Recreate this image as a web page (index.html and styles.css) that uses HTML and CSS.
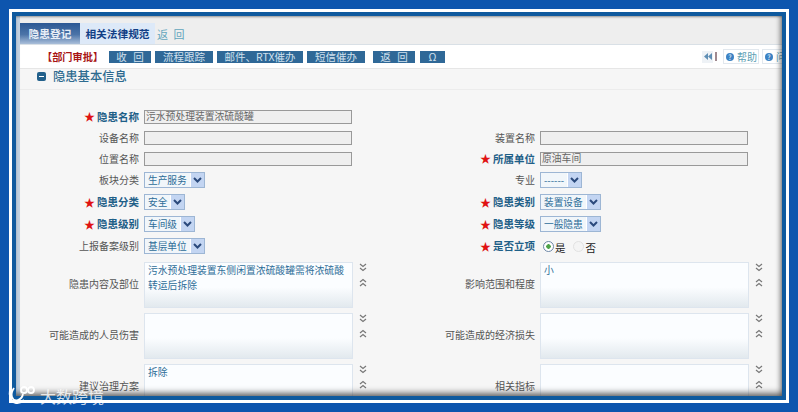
FILE: index.html
```html
<!DOCTYPE html>
<html lang="zh-CN">
<head>
  <meta charset="UTF-8">
  <title>隐患登记</title>
  <link rel="stylesheet" href="styles.css">
</head>
<body>
  <div class="frame">
    <div class="content">
      <nav class="tabbar">
        <a class="tab tab-active">隐患登记</a>
        <a class="tab">相关法律规范</a>
        <a class="tab-back">返 回</a>
      </nav>

      <div class="toolbar">
        <span class="stage">【部门审批】</span>
        <button class="btn btn-short">收 回</button>
        <button class="btn btn-mid">流程跟踪</button>
        <button class="btn btn-long">邮件、RTX催办</button>
        <button class="btn btn-mid">短信催办</button>
        <button class="btn btn-short btn-apart">返 回</button>
        <button class="btn btn-omega">Ω</button>
        <div class="tools">
          <span class="collapse">
            <svg width="8" height="7" viewBox="0 0 8 7"><path d="M4 0v7L0 3.500zM8 0v7L4 3.500z" fill="#5f8fb5"/></svg>
          </span>
          <span class="tool-sep"></span>
          <span class="help"><i class="help-icon">?</i>帮助</span>
          <span class="help"><i class="help-icon">?</i>问题</span>
        </div>
      </div>

      <h2 class="section"><span class="minus"></span>隐患基本信息</h2>

      <form class="form">
        <label class="label required"><i>★</i>隐患名称</label>
        <div class="field span-3"><input class="text" readonly value="污水预处理装置浓硫酸罐"></div>

        <label class="label">设备名称</label>
        <div class="field"><input class="text" readonly></div>
        <label class="label">装置名称</label>
        <div class="field"><input class="text" readonly></div>

        <label class="label">位置名称</label>
        <div class="field"><input class="text" readonly></div>
        <label class="label required"><i>★</i>所属单位</label>
        <div class="field"><input class="text" readonly value="原油车间"></div>

        <label class="label">板块分类</label>
        <div class="field"><span class="select"><span class="select-value">生产服务</span><span class="select-arrow"><svg width="9" height="6" viewBox="0 0 9 6"><path d="M1 1l3.500 3.500L8 1" fill="none" stroke="#2b4a7c" stroke-width="2"/></svg></span></span></div>
        <label class="label">专业</label>
        <div class="field"><span class="select"><span class="select-value">------</span><span class="select-arrow"><svg width="9" height="6" viewBox="0 0 9 6"><path d="M1 1l3.500 3.500L8 1" fill="none" stroke="#2b4a7c" stroke-width="2"/></svg></span></span></div>

        <label class="label required"><i>★</i>隐患分类</label>
        <div class="field"><span class="select"><span class="select-value">安全</span><span class="select-arrow"><svg width="9" height="6" viewBox="0 0 9 6"><path d="M1 1l3.500 3.500L8 1" fill="none" stroke="#2b4a7c" stroke-width="2"/></svg></span></span></div>
        <label class="label required"><i>★</i>隐患类别</label>
        <div class="field"><span class="select"><span class="select-value">装置设备</span><span class="select-arrow"><svg width="9" height="6" viewBox="0 0 9 6"><path d="M1 1l3.500 3.500L8 1" fill="none" stroke="#2b4a7c" stroke-width="2"/></svg></span></span></div>

        <label class="label required"><i>★</i>隐患级别</label>
        <div class="field"><span class="select"><span class="select-value">车间级</span><span class="select-arrow"><svg width="9" height="6" viewBox="0 0 9 6"><path d="M1 1l3.500 3.500L8 1" fill="none" stroke="#2b4a7c" stroke-width="2"/></svg></span></span></div>
        <label class="label required"><i>★</i>隐患等级</label>
        <div class="field"><span class="select"><span class="select-value">一般隐患</span><span class="select-arrow"><svg width="9" height="6" viewBox="0 0 9 6"><path d="M1 1l3.500 3.500L8 1" fill="none" stroke="#2b4a7c" stroke-width="2"/></svg></span></span></div>

        <label class="label">上报备案级别</label>
        <div class="field"><span class="select"><span class="select-value">基层单位</span><span class="select-arrow"><svg width="9" height="6" viewBox="0 0 9 6"><path d="M1 1l3.500 3.500L8 1" fill="none" stroke="#2b4a7c" stroke-width="2"/></svg></span></span></div>
        <label class="label required"><i>★</i>是否立项</label>
        <div class="field radios">
          <span class="radio radio-on"></span><span class="radio-text">是</span>
          <span class="radio"></span><span class="radio-text">否</span>
        </div>

        <div class="notes">
          <label class="label">隐患内容及部位</label>
          <div class="field note"><textarea readonly>污水预处理装置东侧闲置浓硫酸罐需将浓硫酸转运后拆除</textarea><span class="resize"><svg width="8" height="9" viewBox="0 0 8 9"><path d="M1 1l3 2.500L7 1M1 5l3 2.500L7 5" fill="none" stroke="#777" stroke-width="1.200"/></svg><svg width="8" height="9" viewBox="0 0 8 9"><path d="M1 4l3-2.500L7 4M1 8l3-2.500L7 8" fill="none" stroke="#777" stroke-width="1.200"/></svg></span></div>
          <label class="label">影响范围和程度</label>
          <div class="field note"><textarea readonly>小</textarea><span class="resize"><svg width="8" height="9" viewBox="0 0 8 9"><path d="M1 1l3 2.500L7 1M1 5l3 2.500L7 5" fill="none" stroke="#777" stroke-width="1.200"/></svg><svg width="8" height="9" viewBox="0 0 8 9"><path d="M1 4l3-2.500L7 4M1 8l3-2.500L7 8" fill="none" stroke="#777" stroke-width="1.200"/></svg></span></div>

          <label class="label">可能造成的人员伤害</label>
          <div class="field note"><textarea readonly></textarea><span class="resize"><svg width="8" height="9" viewBox="0 0 8 9"><path d="M1 1l3 2.500L7 1M1 5l3 2.500L7 5" fill="none" stroke="#777" stroke-width="1.200"/></svg><svg width="8" height="9" viewBox="0 0 8 9"><path d="M1 4l3-2.500L7 4M1 8l3-2.500L7 8" fill="none" stroke="#777" stroke-width="1.200"/></svg></span></div>
          <label class="label">可能造成的经济损失</label>
          <div class="field note"><textarea readonly></textarea><span class="resize"><svg width="8" height="9" viewBox="0 0 8 9"><path d="M1 1l3 2.500L7 1M1 5l3 2.500L7 5" fill="none" stroke="#777" stroke-width="1.200"/></svg><svg width="8" height="9" viewBox="0 0 8 9"><path d="M1 4l3-2.500L7 4M1 8l3-2.500L7 8" fill="none" stroke="#777" stroke-width="1.200"/></svg></span></div>

          <label class="label">建议治理方案</label>
          <div class="field note"><textarea readonly>拆除</textarea><span class="resize"><svg width="8" height="9" viewBox="0 0 8 9"><path d="M1 1l3 2.500L7 1M1 5l3 2.500L7 5" fill="none" stroke="#777" stroke-width="1.200"/></svg><svg width="8" height="9" viewBox="0 0 8 9"><path d="M1 4l3-2.500L7 4M1 8l3-2.500L7 8" fill="none" stroke="#777" stroke-width="1.200"/></svg></span></div>
          <label class="label">相关指标</label>
          <div class="field note"><textarea readonly></textarea><span class="resize"><svg width="8" height="9" viewBox="0 0 8 9"><path d="M1 1l3 2.500L7 1M1 5l3 2.500L7 5" fill="none" stroke="#777" stroke-width="1.200"/></svg><svg width="8" height="9" viewBox="0 0 8 9"><path d="M1 4l3-2.500L7 4M1 8l3-2.500L7 8" fill="none" stroke="#777" stroke-width="1.200"/></svg></span></div>
        </div>
      </form>
    </div>
  </div>

  <div class="watermark">
    <svg width="27" height="20" viewBox="0 0 27 20"><g fill="none" stroke="#fff" stroke-width="1.800"><path d="M15 8c-1 6-9 9-11 3-1-3 0-6 2-9"/><path d="M2 3c-1 6 0 13 6 14 3 .500 6-1 8-3"/><circle cx="16" cy="4" r="3"/><circle cx="23" cy="4" r="3"/></g></svg>
    <span>大数跨境</span>
  </div>
</body>
</html>
```

FILE: styles.css
```css
* {
  box-sizing: border-box;
}

html, body {
  margin: 0;
  height: 100%;
  overflow: hidden;
}

body {
  background: #0d55ae;
  padding: 9px;
  font-family: "Noto Sans CJK SC", "Liberation Sans", sans-serif;
  font-size: 10px;
  color: #555;
}

.frame {
  width: 780px;
  height: 394px;
  border: 3px solid #fff;
  background: #0f5a9e;
  padding: 4px;
}

.content {
  position: relative;
  height: 100%;
  overflow: hidden;
  background: #f6f6f6;
  padding-left: 4px;
}

.content::before {
  content: "";
  position: absolute;
  left: 0;
  top: 0;
  bottom: 0;
  width: 4px;
  background: #c4d4e4;
}

.content::after {
  content: "";
  position: absolute;
  inset: 0;
  pointer-events: none;
  box-shadow: inset -4px 0 5px -2px rgba(60, 60, 60, .55), inset 0 -6px 6px -3px rgba(50, 50, 50, .7), inset 0 2px 2px -1px rgba(60, 60, 60, .4);
}

/* tabs */
.tabbar {
  display: flex;
  align-items: center;
  height: 29px;
  padding-top: 7px;
  background: #eeeeee;
  border-bottom: 1px solid #d9e0e6;
}

.tab {
  display: flex;
  align-items: center;
  justify-content: center;
  width: 75px;
  height: 21px;
  background: #dde9f8;
  color: #123f86;
  font-weight: 700;
  font-size: 10.7px;
}

.tab-active {
  width: 60px;
  color: #e8eef6;
  background: linear-gradient(#2b5894, #4c74a8 55%, #aabfda);
}

.tab-back {
  margin-left: 2px;
  color: #62a6bd;
  font-size: 11px;
  word-spacing: 3px;
}

/* toolbar */
.toolbar {
  display: flex;
  align-items: center;
  height: 24px;
  padding: 0 0 0 22px;
  background: #fff;
  border-bottom: 1px solid #e6e6e6;
}

.stage {
  width: 67px;
  color: #a81414;
  font-weight: 700;
  font-size: 10.2px;
  text-spacing-trim: space-all;
  white-space: nowrap;
}

.btn {
  height: 12px;
  margin-right: 4px;
  padding: 0;
  border: 0;
  background: #2f6897;
  color: #cfe0ee;
  font: inherit;
  font-size: 10.5px;
  line-height: 12px;
  word-spacing: 4px;
}

.btn-short { width: 42px; }
.btn-mid { width: 58px; }
.btn-long { width: 86px; }
.btn-apart { margin-left: 4px; margin-right: 5px; }
.btn-omega { width: 25px; margin-right: 0; }

.tools {
  display: flex;
  align-items: center;
  margin-left: auto;
  white-space: nowrap;
}

.collapse {
  display: flex;
  align-items: center;
  justify-content: center;
  width: 11px;
  height: 12px;
  background: #eef2f6;
}

.tool-sep {
  width: 2px;
  height: 9px;
  margin: 0 6px 0 2px;
  background: #a08a90;
}

.help {
  display: flex;
  align-items: center;
  flex-shrink: 0;
  gap: 3px;
  width: 36px;
  height: 15px;
  margin-right: 3px;
  padding: 0 1px 0 2px;
  border: 1px solid #e2e8ee;
  color: #5da0b4;
  font-size: 10px;
}

.help:last-child {
  margin-right: -16px;
}

.help-icon {
  width: 8px;
  height: 8px;
  border-radius: 50%;
  background: #3c82c4;
  color: #fff;
  font-style: normal;
  font-size: 7px;
  line-height: 8px;
  text-align: center;
}

/* section title */
.section {
  display: flex;
  align-items: center;
  gap: 7px;
  height: 21px;
  margin: 0;
  padding: 0 0 6px 17px;
  border-bottom: 1px solid #ececec;
  color: #2e6b90;
  font-size: 12.3px;
  font-weight: 500;
}

.minus {
  position: relative;
  width: 9px;
  height: 9px;
  border-radius: 2px;
  background: #23618c;
}

.minus::after {
  content: "";
  position: absolute;
  left: 2px;
  right: 2px;
  top: 4px;
  height: 1px;
  background: #fff;
}

/* form */
.form,
.notes {
  display: grid;
  grid-template-columns: 119px 272px 114px 1fr;
  column-gap: 5px;
}

.form {
  grid-template-rows: 21px 21px 21px 22px 22px 22px 22px;
  padding-top: 16px;
}

.notes {
  grid-column: 1 / -1;
  grid-auto-rows: 46px;
  row-gap: 5px;
  padding-top: 5px;
}

.label {
  display: flex;
  align-items: center;
  justify-content: flex-end;
  padding-bottom: 1px;
  white-space: nowrap;
}

.notes .label {
  padding-bottom: 3px;
}

.required {
  color: #1f6088;
  font-weight: 700;
  font-size: 10.5px;
}

.required i {
  margin-right: 2px;
  color: #e01212;
  font-style: normal;
  font-size: 11px;
}

.field {
  display: flex;
  align-items: center;
}

.span-3 {
  grid-column: span 3;
}

.text {
  width: 208px;
  height: 14px;
  padding: 0 0 2px 1px;
  border: 1px solid #999;
  background: #efefef;
  color: #666;
  font: inherit;
  font-size: 9.8px;
  outline: none;
}

.select {
  display: inline-flex;
  align-items: center;
  height: 16px;
  border: 1px solid #9db6d4;
  background: #fff;
  color: #2e6d98;
  font-size: 9.7px;
}

.select-value {
  padding: 0 3px;
  background: #f1f6fa;
}

.select-arrow {
  display: flex;
  align-items: center;
  justify-content: center;
  width: 13px;
  height: 14px;
  margin-left: 1px;
  background: #c3d5f2;
}

.radios {
  padding-left: 3px;
  color: #222;
}

.radio {
  width: 11px;
  height: 11px;
  border: 1px solid #e2e2e2;
  border-radius: 50%;
  background: #f4f4f4;
}

.radio-on {
  border-color: #6d87a6;
  background: radial-gradient(circle, #4fa34a 0 2px, #fff 2.5px);
}

.radio-text {
  margin: 2px 7px 0 1px;
  font-size: 10.5px;
}

.radio-text:last-child {
  margin-left: 2px;
}

.note {
  align-items: flex-start;
}

.note textarea {
  width: 209px;
  height: 46px;
  padding: 0 3px;
  border: 1px solid #dde5ee;
  background: linear-gradient(#fbfdff 55%, #e2e9ee);
  color: #2e6d98;
  font: inherit;
  font-size: 9.8px;
  line-height: 15px;
  resize: none;
  overflow: hidden;
  outline: none;
}

.resize {
  display: flex;
  flex-direction: column;
  gap: 6px;
  margin: 1px 0 0 6px;
}

.resize svg {
  display: block;
}

.watermark {
  position: absolute;
  left: 8px;
  top: 384px;
  display: flex;
  align-items: center;
  gap: 5px;
  color: rgba(255, 255, 255, .8);
  font-size: 16px;
}
```
